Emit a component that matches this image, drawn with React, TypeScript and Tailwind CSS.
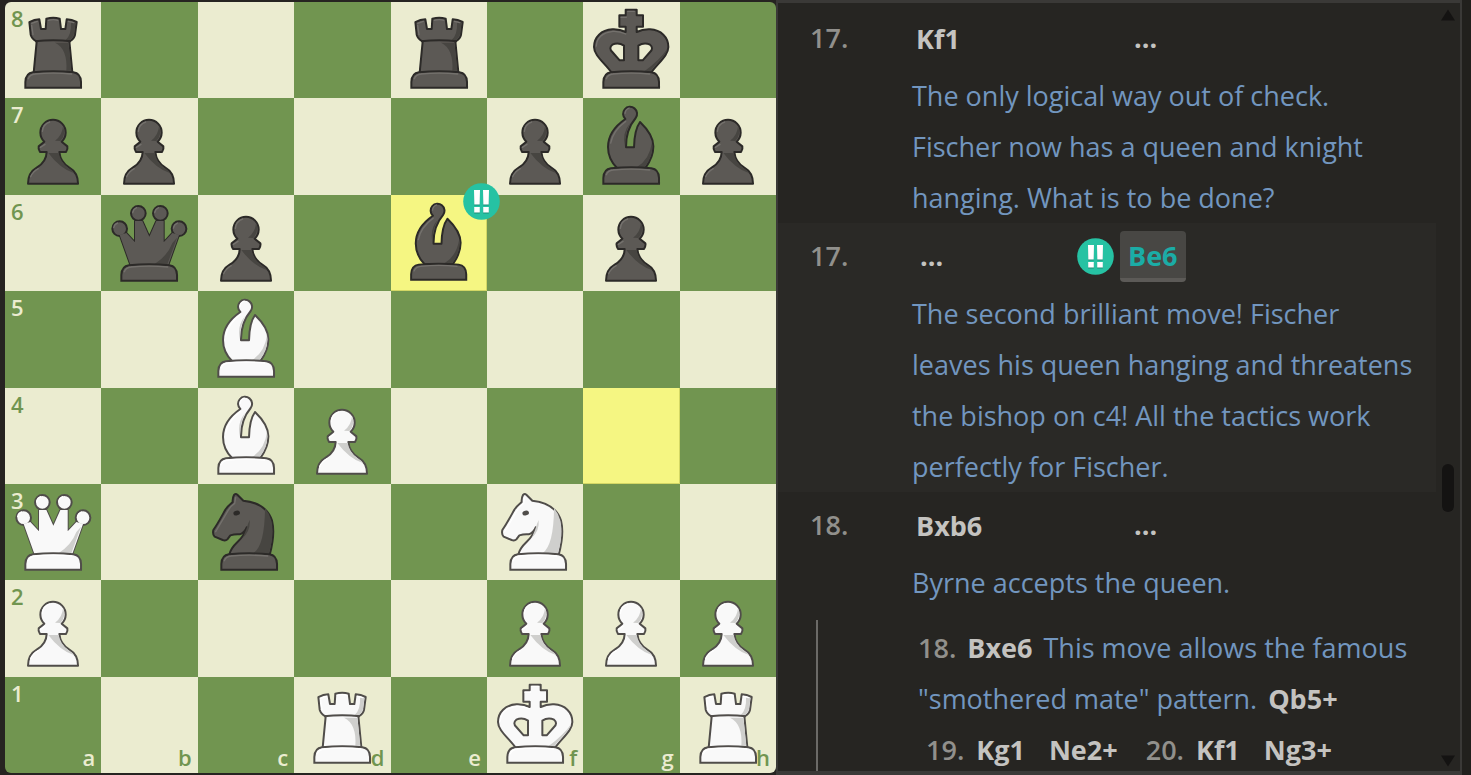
import { Fragment, type ReactNode } from 'react';
import clsx from 'clsx';

type Kind = 'p' | 'n' | 'b' | 'r' | 'q' | 'k';

const POSITION = [
  'r...r.k.',
  'pp...pbp',
  '.qp.b.p.',
  '..B.....',
  '..BP....',
  'Q.n..N..',
  'P....PPP',
  '...R.K.R',
];
const FILES = 'abcdefgh';
const HIGHLIGHTED = ['e6', 'g4'];
const BRILLIANT = 'e6';

const PATHS: Record<Kind, string> = {
  p: 'M118 131L101 145Q99 152 105 162H125Q124 192 95 209Q69 224 69 257H219Q219 224 193 209Q166 192 163 162H183Q189 152 187 145L170 131A38 38 0 1 0 118 131Z',
  n: 'M94 212C100 175 138 172 146 130Q140 146 125 151Q110 150 97 154L88 166Q83 171 74 168L50 158Q43 152 46 138C60 118 72 95 82 77C90 64 98 60 104 54Q103 42 108 33Q113 28 118 32L136 50C185 55 212 80 222 110Q232 150 215 212Z',
  b: 'M127 63C95 85 75 115 75 147C75 172 86 194 102 210H187C202 190 211 170 211 145C211 120 192 92 171 72Q154 95 153 148H129Q128 95 158 60A21 21 0 1 0 127 63Z',
  r: 'M73 60Q88 52 103 52L108 81H122L124 50Q145 45 164 50L168 81H181L185 52Q200 53 215 60L210 98Q207 112 193 118L202 212H86L95 118Q81 112 77 98Z',
  q: 'M56 120L89 212H201L234 120L214 114L188 142V78H166L145 125L124 78H102V142L76 114Z',
  k: 'M128 90Q110 81 88 82C55 84 33 105 33 135C33 160 64 182 86 212H204C226 182 256 160 256 135C256 105 234 84 201 82Q179 81 161 90V74H180V40H161V23H128V40H109V74H128ZM123 131Q106 120 88 128Q76 138 88 150L110 175H123ZM166 131Q183 120 201 128Q213 138 201 150L179 175H166Z',
};

const SHADES: Record<Kind, string> = {
  p: 'M130 165H161Q165 192 191 211Q202 218 208 226Q165 212 130 165ZM174 84Q172 112 150 128L166 129Q184 110 174 84Z',
  n: 'M220 110Q229 150 213 207H167Q200 184 201 72Q214 88 220 110ZM144 138Q150 118 155 108Q158 140 134 162Z',
  b: 'M207 132Q213 172 185 207H162Q200 184 207 132ZM141 76Q125 108 126 146Q116 105 141 76Z',
  r: 'M150 122H190L199 206H184Q188 140 150 122ZM211 64L207 97Q203 109 194 114H182Q200 98 198 60Z',
  q: 'M228 128L199 208H160Q200 182 214 144Z',
  k: 'M252 142C249 160 222 182 202 208H184Q230 174 252 142Z',
};

const SHINES: Record<Kind, string> = {
  p: 'M112 100Q114 78 134 72M77 236Q84 220 100 212M106 148L120 139',
  n: 'M53 143L90 80Q98 66 110 58L113 40',
  b: 'M83 135Q90 98 128 70M126 46Q127 34 138 30',
  r: 'M80 64L97 58M84 98L80 70M130 55Q145 51 158 55M190 58L206 62',
  q: 'M38 98Q40 87 50 84M95 53Q97 42 107 38M161 53Q163 42 173 38M217 99Q219 88 229 84',
  k: 'M40 132Q42 94 90 88Q110 87 128 96M134 28H154M114 46H130',
};

const QUEEN_BALLS = [[56, 101], [112, 55], [178, 55], [234, 101]];

function Piece({ kind, white }: { kind: Kind; white: boolean }) {
  const fill = white ? '#f9f9f9' : '#5c5955';
  const line = white ? '#504d4a' : '#2c2a28';
  const shade = white ? '#cfcfcd' : '#474541';
  const shine = white ? '#ffffff' : '#74716d';

  return (
    <svg viewBox="0 0 289 289" className="absolute inset-0 size-full" aria-hidden="true">
      <g stroke={line} strokeWidth="6" strokeLinejoin="round" fill={fill} fillRule="evenodd">
        <path d={PATHS[kind]} />
        {kind === 'q' && QUEEN_BALLS.map(([x, y]) => <circle key={x} cx={x} cy={y} r="22" />)}
      </g>
      {kind === 'q' && <path d={PATHS.q} fill={fill} />}
      <path d={SHADES[kind]} fill={shade} />
      <path d={SHINES[kind]} fill="none" stroke={shine} strokeWidth="4" strokeLinecap="round" />
      {kind === 'r' && <path d="M90 118Q145 112 198 118" fill="none" stroke={line} strokeWidth="6" />}
      {kind === 'n' && <ellipse cx="116" cy="87" rx="10" ry="7" fill={line} transform="rotate(-15 116 87)" />}
      {kind !== 'p' && (
        <g transform={kind === 'n' ? 'translate(9 0)' : undefined}>
          <path
            d="M61 257V240Q62 214 84 211Q145 205 205 211Q227 214 228 240V257Z"
            fill={fill}
            stroke={line}
            strokeWidth="6"
          />
          <path d="M70 230Q75 217 90 216Q145 211 200 216" fill="none" stroke={shine} strokeWidth="4" strokeLinecap="round" />
        </g>
      )}
    </svg>
  );
}

function BrilliantBadge({ className }: { className?: string }) {
  return (
    <svg viewBox="0 0 37 37" className={clsx('size-[37px] shrink-0', className)} role="img" aria-label="Brilliant move">
      <circle cx="18.5" cy="18.5" r="18.3" fill="#26c2a3" />
      <path d="M11 8h6l-.3 14.500h-5.400zM20 8h6l-.3 14.500h-5.400zM11.200 25h5.600v5.500h-5.600zM20.200 25h5.600v5.500h-5.600z" fill="#1c8c77" />
      <path d="M11 7h6l-.3 14.500h-5.400zM20 7h6l-.3 14.500h-5.400zM11.200 24h5.600v5.500h-5.600zM20.200 24h5.600v5.500h-5.600z" fill="#fff" />
    </svg>
  );
}

function Board() {
  return (
    <div className="grid aspect-square h-full shrink-0 grid-cols-8 grid-rows-8 overflow-hidden rounded-md">
      {POSITION.map((rank, row) => (
        <Fragment key={row}>
          {rank.split('').map((char, col) => {
            const square = `${FILES[col]}${8 - row}`;
            const light = (row + col) % 2 === 0;
            return (
              <div
                key={square}
                className={clsx(
                  'relative text-[22px] leading-6 font-semibold',
                  HIGHLIGHTED.includes(square)
                    ? 'border-r border-b border-[#d3d765] bg-[#f5f682]'
                    : light
                      ? 'bg-[#ebecd0]'
                      : 'bg-[#719550]',
                  light ? 'text-[#719550]' : 'text-[#ebecd0]',
                )}
              >
                {col === 0 && <span className="absolute top-1 left-1.5">{8 - row}</span>}
                {row === 7 && <span className="absolute right-1.5 bottom-1">{FILES[col]}</span>}
                {char !== '.' && <Piece kind={char.toLowerCase() as Kind} white={char !== char.toLowerCase()} />}
                {square === BRILLIANT && <BrilliantBadge className="absolute -top-3 -right-3.5 z-10" />}
              </div>
            );
          })}
        </Fragment>
      ))}
    </div>
  );
}

function MoveRow({ number, white, black }: { number: string; white: ReactNode; black: ReactNode }) {
  return (
    <div className="grid h-[65px] grid-cols-[102px_165px_1fr] items-center pt-0.5 pl-8 font-bold text-[#c4c3c0]">
      <MoveNumber>{number}</MoveNumber>
      <div className="flex items-center">{white}</div>
      <div className="flex items-center gap-1.5">{black}</div>
    </div>
  );
}

function Comment({ children }: { children: ReactNode }) {
  return <p className="pr-5 pl-[134px] leading-[51px] text-[#7296bf]">{children}</p>;
}

function Move({ children }: { children: ReactNode }) {
  return <button className="cursor-pointer px-1 leading-9 font-bold text-[#c4c3c0]">{children}</button>;
}

function MoveNumber({ children }: { children: ReactNode }) {
  return <span className="font-semibold text-[#91908c]">{children}</span>;
}

export default function App() {
  return (
    <main className="flex h-screen overflow-hidden bg-[#262421] py-0.5 pl-[5px] font-['Open_Sans','Noto_Sans',sans-serif] text-[27px]">
      <Board />
      <section className="-my-0.5 flex min-w-0 flex-1 border-t-[3px] border-r-2 border-b-4 border-l-2 border-[#3a3937] bg-[#262522]" aria-label="Moves">
        <div className="min-w-0 flex-1 overflow-hidden pt-0.5">
          <MoveRow number="17." white={<Move>Kf1</Move>} black={<span className="pl-[57px]">...</span>} />
          <Comment>
            The only logical way out of check. Fischer now has a queen and knight hanging. What is to be done?
          </Comment>

          <div className="bg-[#2a2926]">
            <MoveRow
              number="17."
              white={<span className="pl-2">...</span>}
              black={
                <>
                  <BrilliantBadge />
                  <button className="h-[51px] cursor-pointer rounded border-b-4 border-[#5c5a57] bg-[#484744] px-2 pt-1 text-[#1baca6]">
                    Be6
                  </button>
                </>
              }
            />
            <Comment>
              The second brilliant move! Fischer leaves his queen hanging and threatens the bishop on c4! All the
              tactics work perfectly for Fischer.
            </Comment>
          </div>

          <MoveRow number="18." white={<Move>Bxb6</Move>} black={<span className="pl-[57px]">...</span>} />
          <Comment>Byrne accepts the queen.</Comment>

          <div className="mt-3 ml-[38px] border-l-2 border-[#6b6a67] pt-0.5 pr-4 pl-[100px] leading-[51px]">
            <MoveNumber>18.</MoveNumber> <Move>Bxe6</Move>{' '}
            <span className="text-[#7296bf]">This move allows the famous "smothered mate" pattern.</span>{' '}
            <Move>Qb5+</Move>
            <div className="flex gap-4 pl-2">
              <div className="flex items-center gap-2">
                <MoveNumber>19.</MoveNumber>
                <Move>Kg1</Move>
              </div>
              <Move>Ne2+</Move>
              <div className="flex items-center gap-2 pl-2">
                <MoveNumber>20.</MoveNumber>
                <Move>Kf1</Move>
              </div>
              <Move>Ng3+</Move>
            </div>
          </div>
        </div>

        {/* scroll bar */}
        <div className="flex w-6 shrink-0 flex-col items-center pt-1.5 pb-1">
          <svg viewBox="0 0 14 11" className="h-3 w-3.5" aria-hidden="true">
            <path d="M7 0L14 11H0Z" fill="#141312" />
          </svg>
          <div className="grow-[444]" />
          <div className="h-12 w-3 rounded-full bg-[#141312]" />
          <div className="grow-[243]" />
          <svg viewBox="0 0 14 11" className="h-3 w-3.5" aria-hidden="true">
            <path d="M7 11L0 0H14Z" fill="#141312" />
          </svg>
        </div>
      </section>
      <div className="-my-0.5 w-[9px] shrink-0 bg-[#21201d]" />
    </main>
  );
}
